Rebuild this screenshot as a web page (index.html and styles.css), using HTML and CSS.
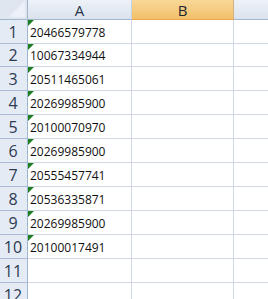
FILE: index.html
```html
<!DOCTYPE html>
<html>
<head>
<meta charset="utf-8">
<link rel="stylesheet" href="styles.css">
</head>
<body>
<div class="sheet">
  <div class="corner"><span class="tri"></span></div>
  <div class="colhead">A</div>
  <div class="colhead sel">B</div>
  <div class="colhead last"></div>

  <div class="rowhead">1</div><div class="cell txt">20466579778</div><div class="cell"></div><div class="cell last"></div>
  <div class="rowhead">2</div><div class="cell txt">10067334944</div><div class="cell"></div><div class="cell last"></div>
  <div class="rowhead">3</div><div class="cell txt">20511465061</div><div class="cell"></div><div class="cell last"></div>
  <div class="rowhead">4</div><div class="cell txt">20269985900</div><div class="cell"></div><div class="cell last"></div>
  <div class="rowhead">5</div><div class="cell txt">20100070970</div><div class="cell"></div><div class="cell last"></div>
  <div class="rowhead">6</div><div class="cell txt">20269985900</div><div class="cell"></div><div class="cell last"></div>
  <div class="rowhead">7</div><div class="cell txt">20555457741</div><div class="cell"></div><div class="cell last"></div>
  <div class="rowhead">8</div><div class="cell txt">20536335871</div><div class="cell"></div><div class="cell last"></div>
  <div class="rowhead">9</div><div class="cell txt">20269985900</div><div class="cell"></div><div class="cell last"></div>
  <div class="rowhead">10</div><div class="cell txt">20100017491</div><div class="cell"></div><div class="cell last"></div>
  <div class="rowhead">11</div><div class="cell"></div><div class="cell"></div><div class="cell last"></div>
  <div class="rowhead">12</div><div class="cell"></div><div class="cell"></div><div class="cell last"></div>
</div>
</body>
</html>
```
FILE: styles.css
```css
html, body {
  margin: 0;
  padding: 0;
  background: #ffffff;
  overflow: hidden;
}

.sheet {
  display: grid;
  grid-template-columns: 28px 104px 102px 1fr;
  grid-template-rows: 20px 24px 23px repeat(10, 24px);
  width: 268px;
  font-family: "Open Sans", "Liberation Sans", sans-serif;
}

.corner {
  position: relative;
  background: #dfe6f0;
  border-right: 1px solid #9eb6ce;
  border-bottom: 1px solid #9eb6ce;
  box-sizing: border-box;
  overflow: hidden;
}

.corner .tri {
  position: absolute;
  right: 2px;
  bottom: 2px;
  width: 0;
  height: 0;
  border-left: 16px solid transparent;
  border-bottom: 16px solid #edf1f7;
}

.colhead {
  box-sizing: border-box;
  background: linear-gradient(#eef2f8, #dae2ed);
  border-right: 1px solid #c5d3e2;
  border-bottom: 1px solid #9eb6ce;
  display: flex;
  align-items: center;
  justify-content: center;
  font-size: 15px;
  color: #27354d;
  line-height: 1;
  padding-top: 1px;
}

.colhead.sel {
  background: linear-gradient(#f8d898, #f2c06a);
  border-bottom: 1px solid #f0a94a;
  border-right: 1px solid #d5b083;
  color: #1d2433;
}

.colhead.last {
  border-right: none;
}

.rowhead {
  box-sizing: border-box;
  background: #e4ebf5;
  border-right: 1px solid #9eb6ce;
  border-bottom: 1px solid #a9bdd4;
  display: flex;
  align-items: flex-end;
  justify-content: center;
  font-size: 16px;
  line-height: 1;
  color: #2d3a52;
  padding-bottom: 3px;
  padding-right: 1px;
}

.cell {
  position: relative;
  box-sizing: border-box;
  border-right: 1px solid #d0d7e5;
  border-bottom: 1px solid #d0d7e5;
  display: flex;
  align-items: flex-end;
  font-size: 12px;
  line-height: 1;
  color: #111111;
  padding-left: 2px;
  padding-bottom: 4px;
}

.cell.last {
  border-right: none;
}

.cell.txt::before {
  content: "";
  position: absolute;
  left: 0;
  top: 0;
  width: 0;
  height: 0;
  border-top: 6px solid #1e7e22;
  border-right: 6px solid transparent;
}
```
